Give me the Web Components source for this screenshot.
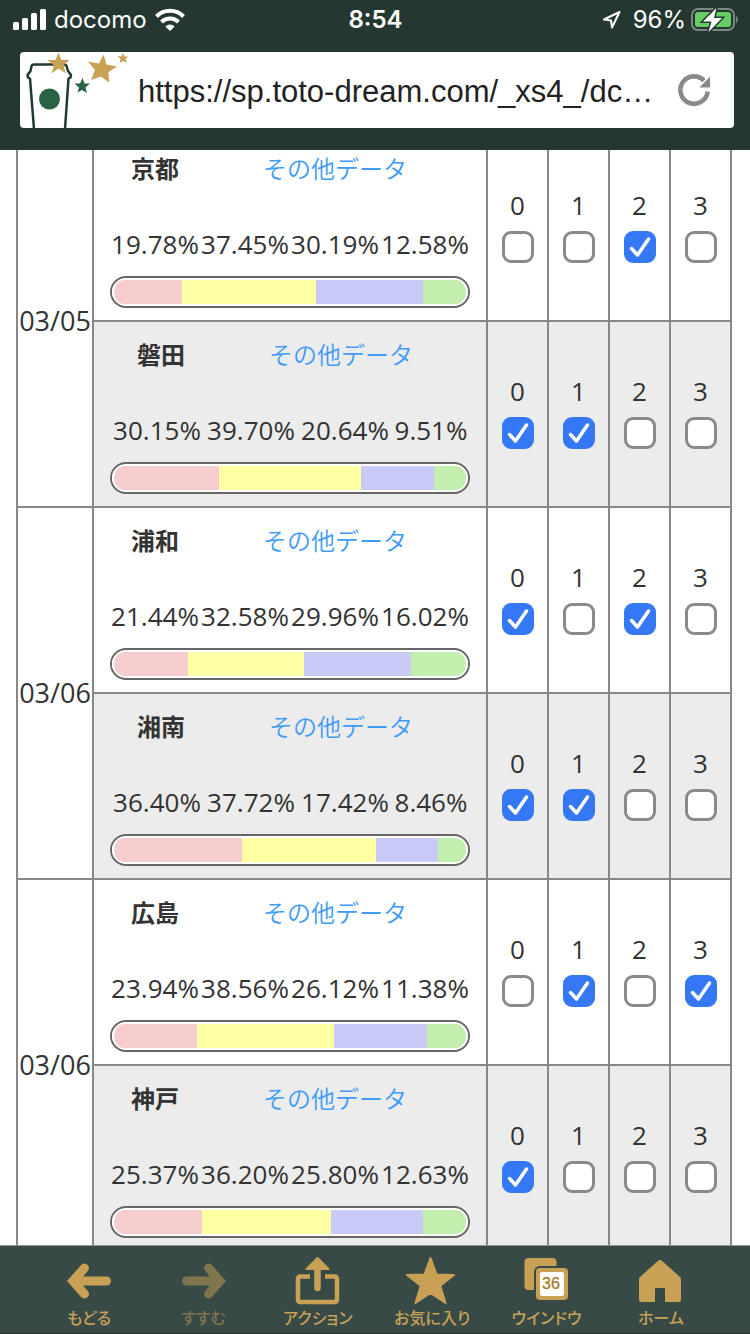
<!DOCTYPE html>
<html lang="ja">
<head>
<meta charset="utf-8">
<meta name="viewport" content="width=device-width">
<title>toto</title>
<style>
html, body { margin: 0; height: 100%; }
body { background: #fff; color: #333; font-family: "Open Sans", "Noto Sans CJK JP", sans-serif; }
</style>
</head>
<body>
<browser-shell>
  <status-bar slot="top"></status-bar>
  <address-bar slot="top" url="https://sp.toto-dream.com/_xs4_/dc…"></address-bar>
  <match-table></match-table>
  <tool-bar slot="bottom">
    <tool-item label="もどる"><svg viewBox="0 0 48 50"><path d="M19.500 12L8 25L19.500 38M8 25H41.500" fill="none" stroke="currentColor" stroke-width="9" stroke-linecap="round"/></svg></tool-item>
    <tool-item label="すすむ" disabled><svg viewBox="0 0 48 50"><path d="M29.500 12L41 25L29.500 38M41 25H7.500" fill="none" stroke="currentColor" stroke-width="9" stroke-linecap="round"/></svg></tool-item>
    <tool-item label="アクション"><svg viewBox="0 0 48 50"><path d="M16 20.500H6a2 2 0 0 0-2 2V44a2 2 0 0 0 2 2H41a2 2 0 0 0 2-2V22.500a2 2 0 0 0-2-2H31" fill="none" stroke="currentColor" stroke-width="4.500"/><path d="M23.500 14V32" stroke="currentColor" stroke-width="6.500" stroke-linecap="round"/><path d="M23.500 2L34.500 13H12.500Z" fill="currentColor" stroke="currentColor" stroke-width="2" stroke-linejoin="round"/></svg></tool-item>
    <tool-item label="お気に入り"><svg viewBox="0 0 48 50"><path d="M22.500 2L28.500 18.500L46 19L32.300 29.800L37.500 47L22.500 37L7.500 47L12.700 29.800L-1 19L16.500 18.500Z" fill="currentColor" stroke="currentColor" stroke-width="2" stroke-linejoin="round"/></svg></tool-item>
    <tool-item label="ウインドウ"><svg viewBox="0 0 48 50"><rect x="2.500" y="2" width="32" height="32" rx="4" fill="currentColor"/><rect x="14" y="12" width="32" height="32" rx="4" fill="currentColor" stroke="#384a45" stroke-width="4"/><rect x="14" y="12" width="32" height="32" rx="4" fill="currentColor"/><rect x="18" y="16" width="24" height="24" rx="2" fill="#fff"/><text x="29" y="33" text-anchor="middle" font-family="Liberation Sans, sans-serif" font-size="16" fill="#a37c2b" stroke="#a37c2b" stroke-width=".3">36</text></svg></tool-item>
    <tool-item label="ホーム"><svg viewBox="0 0 48 50"><path d="M20.500 5.200Q23 3 25.500 5.200L43 21Q44 22 44 24V44Q44 46 42 46H28V32H18V46H4Q2 46 2 44V24Q2 22 3 21Z" fill="currentColor"/></svg></tool-item>
  </tool-bar>
</browser-shell>

<script>
class Base extends HTMLElement {
  constructor() {
    super();
    this.attachShadow({ mode: "open" });
  }
  connectedCallback() {
    this.shadowRoot.innerHTML = this.render();
  }
}

customElements.define("browser-shell", class extends Base {
  render() {
    return `<style>
      :host { display: flex; flex-direction: column; height: 100vh; }
      header { background: #243831; padding-bottom: 22px; }
      main { flex: 1; min-height: 0; overflow: hidden; }
    </style>
    <header><slot name="top"></slot></header>
    <main><slot></slot></main>
    <slot name="bottom"></slot>`;
  }
});

customElements.define("status-bar", class extends Base {
  render() {
    return `<style>
      :host { display: grid; grid-template-columns: 1fr auto 1fr; align-items: center; height: 40px; padding: 0 11px 0 12px;
        color: #fff; font: 24px/40px Inter, sans-serif; }
      div { display: flex; align-items: center; gap: 8px; }
      .end { justify-content: flex-end; gap: 4px; }
      b { font-weight: 600; }
      .arrow { margin-right: 8px; }
    </style>
    <div>
      <svg width="34" height="22" viewBox="0 0 34 22" fill="#fff"><rect x="1" y="13" width="6" height="8" rx="1.500"/><rect x="10" y="9" width="6" height="12" rx="1.500"/><rect x="19" y="4" width="6" height="17" rx="1.500"/><rect x="28" y="0" width="6" height="21" rx="1.500"/></svg>
      <span>docomo</span>
      <svg width="30" height="24" viewBox="1 0 30 24" fill="none" stroke="#fff" stroke-width="4"><path d="M2.500 8.500A19 19 0 0 1 29.500 8.500"/><path d="M7.500 14A12 12 0 0 1 24.500 14"/><path d="M16 23L11.300 18.500Q16 14.500 20.700 18.500Z" fill="#fff" stroke="none"/></svg>
    </div>
    <b>8:54</b>
    <div class="end">
      <svg class="arrow" width="20" height="20" viewBox="0 0 20 20" fill="none" stroke="#fff" stroke-width="2" stroke-linejoin="round"><path d="M18.500 2L3 9.500L10 10.500L11 17.500Z"/></svg>
      <span>96%</span>
      <svg width="49" height="26" viewBox="0 0 49 26"><rect x="2" y="2" width="42" height="21" rx="6" fill="none" stroke="#7b8783" stroke-width="2"/><path d="M46 8.500Q49.500 12.500 46 16.500Z" fill="#7b8783"/><rect x="5" y="5" width="36" height="15" rx="3" fill="#65cd63"/><path d="M26.500 1L13 14.500H21.500L18.500 25L32 11H24Z" fill="#fff" stroke="#243831" stroke-width="3" paint-order="stroke"/></svg>
    </div>`;
  }
});

customElements.define("address-bar", class extends Base {
  render() {
    return `<style>
      :host { display: flex; align-items: center; height: 76px; margin: 12px 16px 0 20px; background: #fff; border-radius: 4px; overflow: hidden; }
      .logo { flex: none; width: 112px; height: 76px; }
      input { flex: 1; min-width: 0; margin: 4px 16px 0 6px; padding: 0; border: 0; outline: 0; background: none; color: #222;
        font: 31px/40px "Liberation Sans", sans-serif; }
      button { flex: none; width: 40px; height: 40px; margin-right: 20px; padding: 0; border: 0; background: none; }
      button svg { display: block; }
    </style>
    <svg class="logo" viewBox="0 0 112 76">
      <path d="M14 77L10 26.500L8 25.500L7.500 23L10.500 19L11.500 14Q12 12.500 14 12.500H44Q46 12.500 46.500 14L48 19L51 23L50.500 25.500L48.500 26.500L45 77" fill="none" stroke="#1f3a30" stroke-width="2.500" stroke-linejoin="round"/>
      <circle cx="29.500" cy="47" r="10.500" fill="#2a6244"/>
      <g fill="#c9a155">
        <path d="M38.500 0.500L41.500 8H49.500L43.500 13.500L46 21.500L38.500 16.500L31.500 21.500L34 13.500L27.500 8H35.500Z"/>
        <path d="M83.500 2.500L86.500 12.500L97 14.500L88.500 20L89 30.500L81 24.500L71 28L75 18L68 9.500L79 11.500Z"/>
        <path d="M103 1L104.500 4.500H108.500L105.500 7L107 11L103 9L99.500 11L100.500 7L97.500 4L101.500 4.500Z"/>
      </g>
      <path d="M62.500 26L64.500 31.500H70L65.500 35.500L67 41L62 38L57.500 40.500L59 35.500L54.500 31.500H60Z" fill="#2a6244"/>
    </svg>
    <input type="text" aria-label="URL" value="${this.getAttribute("url")}">
    <button aria-label="再読み込み"><svg width="40" height="40" viewBox="0 0 40 40"><path d="M33.700 21.500A13.700 13.700 0 1 1 30 10.600" fill="none" stroke="#8a8a8a" stroke-width="4.600"/><path d="M36 6.500V17.500H25.500Z" fill="#8a8a8a"/></svg></button>`;
  }
});

customElements.define("team-odds", class extends Base {
  render() {
    const odds = this.getAttribute("odds").split(",");
    const colors = ["#f5cdcd", "#ffffa3", "#cacaf9", "#c2efae"];
    return `<style>
      :host { display: block; padding: 13px 16px 12px; --first: 90px; --cols: repeat(4, 1fr); }
      :host([narrow]) { --first: 102px; --cols: 94px 94px 94px 1fr; }
      .head, .odds { display: grid; text-align: center; line-height: 38px; white-space: nowrap; }
      .head { grid-template-columns: var(--first) 1fr; margin-bottom: 38px; font-family: "Noto Sans CJK JP", sans-serif; font-size: 24px; }
      a { color: #409bf8; text-decoration: none; font-weight: 350; }
      .odds { grid-template-columns: var(--cols); margin-bottom: 13px; font-size: 26px; }
      .bar { display: flex; box-sizing: border-box; height: 32px; padding: 2px 0; border: 2px solid #666; border-radius: 16px; background: #fff; }
      .bar i { box-sizing: border-box; }
      .bar i:first-child { border-left: 2px solid #fff; border-radius: 14px 0 0 14px; }
      .bar i:last-child { border-right: 2px solid #fff; border-radius: 0 14px 14px 0; }
    </style>
    <div class="head"><b>${this.getAttribute("name")}</b><span><a href="#">その他データ</a></span></div>
    <div class="odds">${odds.map(o => `<span>${o}%</span>`).join("")}</div>
    <div class="bar">${odds.map((o, n) => `<i style="width:${o}%;background:${colors[n]}"></i>`).join("")}</div>`;
  }
});

customElements.define("goal-check", class extends Base {
  render() {
    return `<style>
      :host { display: block; }
      label { display: grid; justify-items: center; grid-template-rows: 26px 32px; row-gap: 12px; font-size: 26px; line-height: 24px; }
      input { grid-area: 2 / 1; appearance: none; box-sizing: border-box; width: 32px; height: 32px; margin: 0; border: 3px solid #8a8a8a; border-radius: 9px; background: #fff; }
      input:checked { border-color: #3478f6; background: #3478f6; }
      svg { grid-area: 2 / 1; z-index: 1; pointer-events: none; visibility: hidden; }
      input:checked + svg { visibility: visible; }
    </style>
    <label><span>${this.getAttribute("goals")}</span><input type="checkbox" ${this.hasAttribute("checked") ? "checked" : ""}>
    <svg width="32" height="32" viewBox="0 0 32 32" fill="none" stroke="#fff" stroke-width="3.500" stroke-linecap="round" stroke-linejoin="round"><path d="M7.500 17.500L13.500 24L24.500 8"/></svg></label>`;
  }
});

const games = [
  ["03/05", [["京都", "19.78,37.45,30.19,12.58", [2]], ["磐田", "30.15,39.70,20.64,9.51", [0, 1]]]],
  ["03/06", [["浦和", "21.44,32.58,29.96,16.02", [0, 2]], ["湘南", "36.40,37.72,17.42,8.46", [0, 1]]]],
  ["03/06", [["広島", "23.94,38.56,26.12,11.38", [1, 3]], ["神戸", "25.37,36.20,25.80,12.63", [0]]]],
];

customElements.define("match-table", class extends Base {
  render() {
    const row = ([name, odds, picks], n, date) => `<tr>
      ${n ? "" : `<th rowspan="2" scope="rowgroup">${date}</th>`}
      <td><team-odds name="${name}" odds="${odds}" ${odds.length < 23 ? "narrow" : ""}></team-odds></td>
      ${[0, 1, 2, 3].map(g => `<td><goal-check goals="${g}" ${picks.includes(g) ? "checked" : ""}></goal-check></td>`).join("")}
    </tr>`;
    return `<style>
      /* the list is scrolled a little past its top edge */
      :host { display: block; margin: -16px 18px 0 16px; }
      table { width: 100%; table-layout: fixed; border-collapse: collapse; }
      th, td { padding: 0; border: 2px solid #888; vertical-align: middle; }
      th { font-weight: 400; font-size: 27px; line-height: 32px; }
      tr:nth-child(2) td { background: #ececec; }
      .date { width: 76px; }
      .goal { width: 61px; }
    </style>
    <table>
      <colgroup><col class="date"><col><col class="goal"><col class="goal"><col class="goal"><col class="goal"></colgroup>
      ${games.map(([date, teams]) => `<tbody>${teams.map((t, n) => row(t, n, date)).join("")}</tbody>`).join("")}
    </table>`;
  }
});

customElements.define("tool-bar", class extends Base {
  render() {
    return `<style>
      :host { display: block; background: #384a45; border-top: 1px solid #8b9592; border-bottom: 1px solid #29332f; }
      nav { display: grid; grid-template-columns: repeat(6, 1fr); padding: 0 32px; }
    </style><nav><slot></slot></nav>`;
  }
});

customElements.define("tool-item", class extends Base {
  render() {
    return `<style>
      :host { display: block; }
      button { display: grid; justify-items: center; width: 100%; padding: 10px 0 6px; border: 0; background: none; color: #c9a155;
        font: 500 16px/20px "Noto Sans CJK JP", sans-serif; font-feature-settings: "palt"; white-space: nowrap; row-gap: 1px; }
      button:disabled { color: #80754d; }
      ::slotted(svg) { display: block; width: 48px; height: 50px; overflow: visible; }
    </style>
    <button ${this.hasAttribute("disabled") ? "disabled" : ""}><slot></slot><span>${this.getAttribute("label")}</span></button>`;
  }
});
</script>
</body>
</html>
